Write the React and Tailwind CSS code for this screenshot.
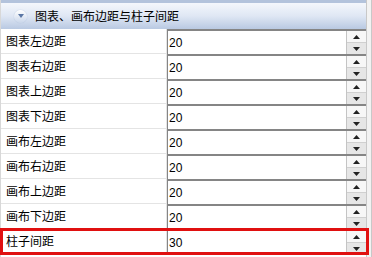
const rows = [
  { label: '图表左边距', value: '20' },
  { label: '图表右边距', value: '20' },
  { label: '图表上边距', value: '20' },
  { label: '图表下边距', value: '20' },
  { label: '画布左边距', value: '20' },
  { label: '画布右边距', value: '20' },
  { label: '画布上边距', value: '20' },
  { label: '画布下边距', value: '20' },
  { label: '柱子间距', value: '30' },
];

function Spin() {
  return (
    <div className="flex w-[20px] flex-col border-l border-[#c4c4c4]">
      <div className="flex h-[12px] items-center justify-center border-b border-[#d0d0d0] bg-[#f7f7f7]">
        <svg width="7" height="4" viewBox="0 0 7 4">
          <path d="M3.5 0 L7 4 L0 4 Z" fill="#222" />
        </svg>
      </div>
      <div className="flex flex-1 items-center justify-center bg-[#e6e6e6]">
        <svg width="7" height="4" viewBox="0 0 7 4">
          <path d="M0 0 L7 0 L3.5 4 Z" fill="#222" />
        </svg>
      </div>
    </div>
  );
}

export default function App() {
  return (
    <div
      className="relative flex h-[257px] w-[372px] overflow-hidden bg-white text-[12px] text-black"
      style={{ fontFamily: '"Noto Sans CJK SC", "Liberation Sans", sans-serif' }}
    >
      <div className="flex w-[366px] flex-col border-l border-[#d8d8d8]">
        <div className="h-[3px] bg-[#b3c3dc]" />
        <div className="flex h-[26px] items-center gap-2 bg-gradient-to-b from-[#f4f7fc] via-[#dfe7f4] to-[#b9c9e2] pl-[13px]">
          <div className="flex h-[13px] w-[13px] items-center justify-center rounded-full bg-gradient-to-b from-[#ffffff] to-[#c9d6ea] shadow-[0_0_1px_#9fb2d0]">
            <svg width="6" height="4" viewBox="0 0 6 4">
              <path d="M0 0 L6 0 L3 4 Z" fill="#5a76a5" />
            </svg>
          </div>
          <span className="leading-none">图表、画布边距与柱子间距</span>
        </div>
        {rows.map((r, i) => (
          <div key={i} className="flex h-[25px]">
            <div className="flex w-[166px] items-center border-b border-r border-[#e4e4e4] pl-[5px]">
              {r.label}
            </div>
            <div className="flex flex-1 border-l border-t-2 border-[#858585]">
              <div
                className="flex flex-1 items-center pl-[1px] text-[12px]"
                style={{ fontFamily: '"Liberation Sans", sans-serif' }}
              >
                {r.value}
              </div>
              <Spin />
            </div>
          </div>
        ))}
      </div>
      <div className="w-[6px] border-l border-r border-[#c8c8c8] bg-[#f2f2f2]" />
      <div className="pointer-events-none absolute left-0 top-[228px] h-[27px] w-[369px] border-[3px] border-[#e01010]" />
    </div>
  );
}
